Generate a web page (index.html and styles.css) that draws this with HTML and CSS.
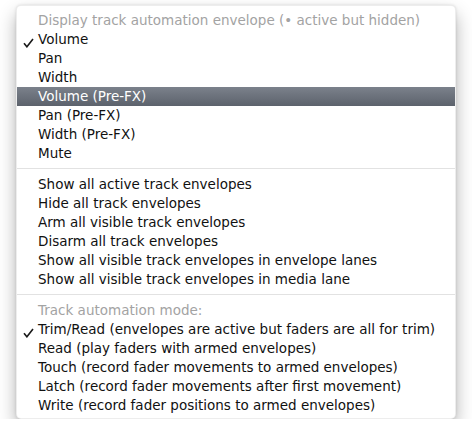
FILE: index.html
```html
<!DOCTYPE html>
<html>
<head>
<meta charset="utf-8">
<link rel="stylesheet" href="styles.css">
</head>
<body>
<div class="menu">
  <div class="item header">Display track automation envelope (• active but hidden)</div>
  <div class="item checked"><svg class="check" width="11" height="10" viewBox="0 0 11 10"><path d="M1 5.2 L3.9 8.8 L10 1" fill="none" stroke="#1a1a1a" stroke-width="1.6"/></svg>Volume</div>
  <div class="item">Pan</div>
  <div class="item">Width</div>
  <div class="item selected">Volume (Pre-FX)</div>
  <div class="item">Pan (Pre-FX)</div>
  <div class="item">Width (Pre-FX)</div>
  <div class="item">Mute</div>
  <div class="sep"></div>
  <div class="item">Show all active track envelopes</div>
  <div class="item">Hide all track envelopes</div>
  <div class="item">Arm all visible track envelopes</div>
  <div class="item">Disarm all track envelopes</div>
  <div class="item">Show all visible track envelopes in envelope lanes</div>
  <div class="item">Show all visible track envelopes in media lane</div>
  <div class="sep"></div>
  <div class="item header">Track automation mode:</div>
  <div class="item checked"><svg class="check" width="11" height="10" viewBox="0 0 11 10"><path d="M1 5.2 L3.9 8.8 L10 1" fill="none" stroke="#1a1a1a" stroke-width="1.6"/></svg>Trim/Read (envelopes are active but faders are all for trim)</div>
  <div class="item">Read (play faders with armed envelopes)</div>
  <div class="item">Touch (record fader movements to armed envelopes)</div>
  <div class="item">Latch (record fader movements after first movement)</div>
  <div class="item">Write (record fader positions to armed envelopes)</div>
</div>
</body>
</html>
```

FILE: styles.css
```css
html, body {
  margin: 0;
  padding: 0;
  background: #ffffff;
}
body {
  padding: 5px 0 0 16px;
  font-family: "DejaVu Sans", sans-serif;
  font-size: 13.5px;
}
.menu {
  width: 440px;
  height: 414px;
  box-sizing: border-box;
  padding: 5px 0 3px 0;
  background: #ffffff;
  border-radius: 5px;
  border: 1px solid rgba(0,0,0,0.07);
  box-shadow: 0 9px 18px rgba(0,0,0,0.3), 0 0 3px rgba(0,0,0,0.12);
}
.item {
  position: relative;
  height: 19px;
  line-height: 19px;
  padding-left: 21px;
  color: #111111;
  white-space: nowrap;
}
.header {
  color: #a3a3a3;
}
.selected {
  background: linear-gradient(#7b818b, #5c626c);
  color: #ffffff;
}
.check {
  position: absolute;
  left: 6px;
  top: 8px;
}
.sep {
  height: 1px;
  margin: 5px 0 6px 0;
  background: #e2e2e2;
}
```
